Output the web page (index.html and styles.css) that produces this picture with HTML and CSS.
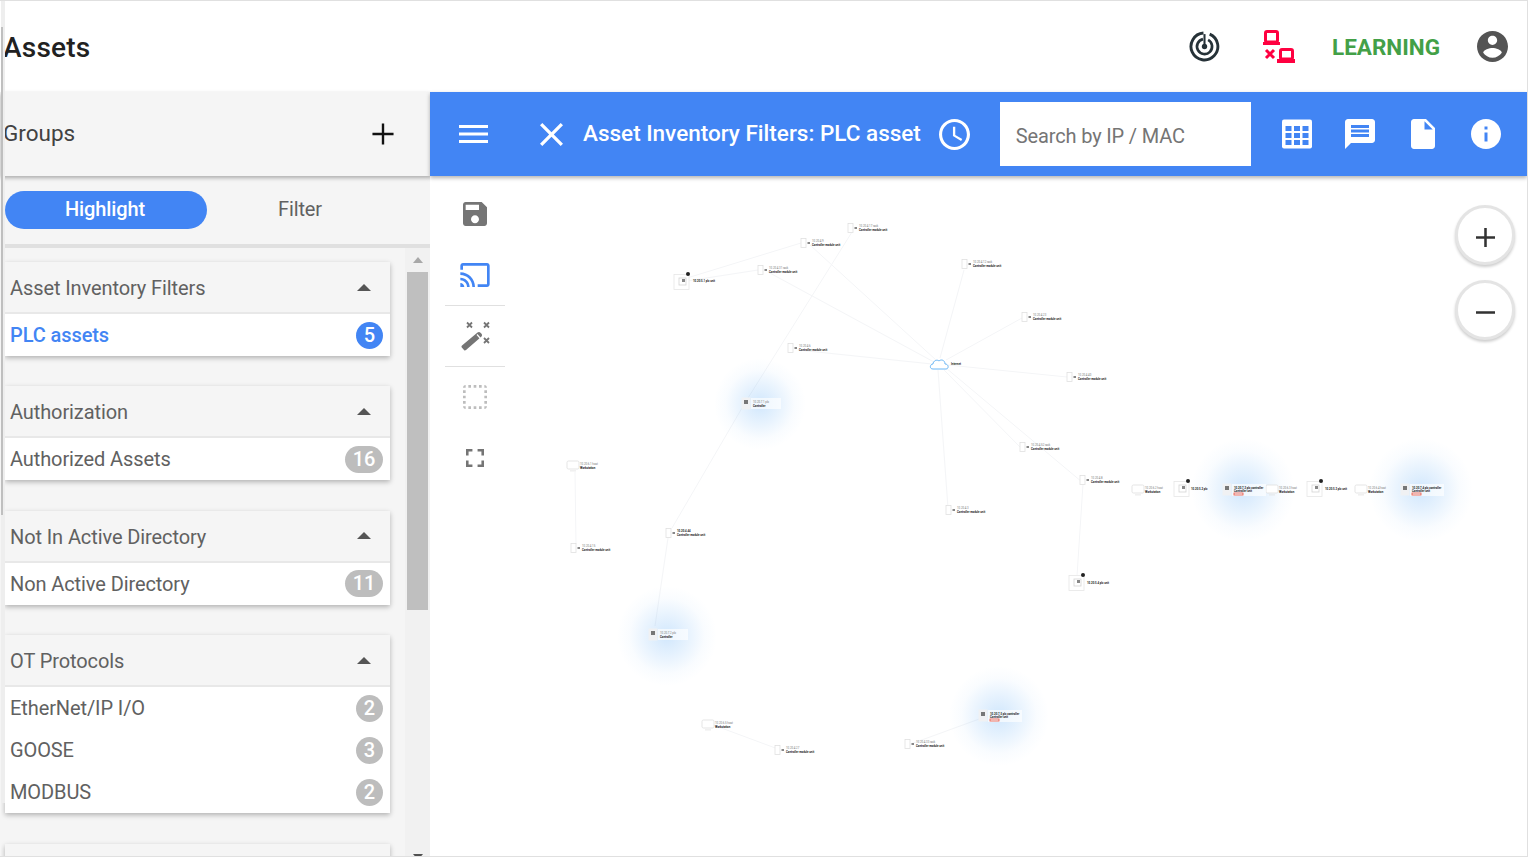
FILE: index.html
```html
<!DOCTYPE html>
<html lang="en">
<head>
    <meta charset="UTF-8">
    <title>Assets</title>
    <link rel="stylesheet" href="styles.css">
</head>
<body>
<div class="app">
    <div class="page-scroll"><div class="page-thumb"></div></div>

    <header class="topbar">
        <h1>Assets</h1>
        <div class="topbar-icons">
            <svg class="radar-icon" viewBox="0 0 30 30">
                <path d="M14 2A13 13 0 1 0 20 3" fill="none" stroke="#263238" stroke-width="2.800"/>
                <path d="M13.500 7.900A7.300 7.300 0 1 0 18.500 8.600" fill="none" stroke="#263238" stroke-width="2.600"/>
                <circle cx="15" cy="15" r="2.600" fill="#263238"/>
                <rect x="14" y="3" width="2" height="12" fill="#263238"/>
            </svg>
            <svg class="net-icon" viewBox="0 0 32 33">
                <rect x="2.500" y="1.500" width="12" height="10.500" rx="1.500" fill="none" stroke="#ff0040" stroke-width="3"/>
                <rect x="0" y="12" width="17" height="3" fill="#ff0040"/>
                <rect x="17.500" y="19.500" width="12" height="9.500" rx="1.500" fill="none" stroke="#ff0040" stroke-width="3"/>
                <rect x="14" y="29" width="18" height="4" fill="#ff0040"/>
                <path d="M3 20l8 8M11 20l-8 8" stroke="#ff0040" stroke-width="3"/>
            </svg>
            <span class="mode-label">LEARNING</span>
            <svg class="account-icon" viewBox="2 2 20 20"><path d="M12 2C6.480 2 2 6.480 2 12s4.480 10 10 10 10-4.480 10-10S17.520 2 12 2zm0 3c1.660 0 3 1.340 3 3s-1.340 3-3 3-3-1.340-3-3 1.340-3 3-3zm0 14.200c-2.500 0-4.710-1.280-6-3.220.03-1.990 4-3.080 6-3.080 1.990 0 5.970 1.090 6 3.080-1.290 1.940-3.500 3.220-6 3.220z"/></svg>
        </div>
    </header>

    <div class="main">
        <aside class="sidebar">
            <div class="groups-head">
                <span>Groups</span>
                <svg class="plus-icon" viewBox="0 0 24 24"><path d="M.5 10.700h10.200V.5h2.600v10.200h10.200v2.600H13.300v10.200h-2.600V13.300H.5z"/></svg>
            </div>
            <div class="tabs">
                <div class="tab tab-active">Highlight</div>
                <div class="tab">Filter</div>
            </div>
            <div class="list-wrap">
                <div class="group-list">
                    <section class="card">
                        <div class="card-head">Asset Inventory Filters<span class="caret"></span></div>
                        <div class="card-body">
                            <div class="row row-active">PLC assets<span class="count count-active">5</span></div>
                        </div>
                    </section>
                    <section class="card">
                        <div class="card-head">Authorization<span class="caret"></span></div>
                        <div class="card-body">
                            <div class="row">Authorized Assets<span class="count count-wide">16</span></div>
                        </div>
                    </section>
                    <section class="card">
                        <div class="card-head">Not In Active Directory<span class="caret"></span></div>
                        <div class="card-body">
                            <div class="row">Non Active Directory<span class="count count-wide">11</span></div>
                        </div>
                    </section>
                    <section class="card">
                        <div class="card-head">OT Protocols<span class="caret"></span></div>
                        <div class="card-body">
                            <div class="row">EtherNet/IP I/O<span class="count">2</span></div>
                            <div class="row">GOOSE<span class="count">3</span></div>
                            <div class="row">MODBUS<span class="count">2</span></div>
                        </div>
                    </section>
                    <section class="card">
                        <div class="card-head"></div>
                    </section>
                </div>
                <div class="list-scroll">
                    <span class="arrow-up"></span>
                    <div class="list-thumb"></div>
                    <span class="arrow-down"></span>
                </div>
            </div>
        </aside>

        <div class="content">
            <div class="toolbar">
                <svg class="tb-icon menu-icon" viewBox="3 6 18 12" preserveAspectRatio="none"><path d="M3 18h18v-2H3v2zm0-5h18v-2H3v2zm0-7v2h18V6H3z"/></svg>
                <svg class="tb-icon close-icon" viewBox="5 5 14 14"><path d="M19 6.410L17.590 5 12 10.590 6.410 5 5 6.410 10.590 12 5 17.590 6.410 19 12 13.410 17.590 19 19 17.590 13.410 12z"/></svg>
                <span class="tb-title">Asset Inventory Filters: PLC asset</span>
                <svg class="tb-icon clock-icon" viewBox="2 2 20 20"><path d="M11.990 2C6.470 2 2 6.480 2 12s4.470 10 9.990 10C17.520 22 22 17.520 22 12S17.520 2 11.990 2zM12 20c-4.420 0-8-3.580-8-8s3.580-8 8-8 8 3.580 8 8-3.580 8-8 8zm.5-13H11v6l5.250 3.150.75-1.230-4.500-2.670z"/></svg>
                <div class="search">Search by IP / MAC</div>
                <div class="tb-actions">
                    <svg class="tb-icon" viewBox="0 0 30 30">
                        <rect x="0" y="0.500" width="30" height="29" rx="2" fill="#fff"/>
                        <g fill="#4285f4">
                            <rect x="3.500" y="7" width="6" height="5"/><rect x="12" y="7" width="6" height="5"/><rect x="20.500" y="7" width="6" height="5"/>
                            <rect x="3.500" y="14" width="6" height="5"/><rect x="12" y="14" width="6" height="5"/><rect x="20.500" y="14" width="6" height="5"/>
                            <rect x="3.500" y="21" width="6" height="5"/><rect x="12" y="21" width="6" height="5"/><rect x="20.500" y="21" width="6" height="5"/>
                        </g>
                    </svg>
                    <svg class="tb-icon" viewBox="2 2 20 20"><path d="M20 2H4c-1.100 0-1.990.9-1.990 2L2 22l4-4h14c1.100 0 2-.9 2-2V4c0-1.100-.9-2-2-2zm-2 12H6v-2h12v2zm0-3H6V9h12v2zm0-3H6V6h12v2z"/></svg>
                    <svg class="tb-icon" viewBox="2 2 20 20"><path d="M6 2c-1.100 0-1.990.9-1.990 2L4 20c0 1.100.89 2 1.990 2H18c1.100 0 2-.9 2-2V8l-6-6H6zm7 7V3.500L18.500 9H13z"/></svg>
                    <svg class="tb-icon" viewBox="2 2 20 20"><path d="M12 2C6.480 2 2 6.480 2 12s4.480 10 10 10 10-4.480 10-10S17.520 2 12 2zm1 15h-2v-6h2v6zm0-8h-2V7h2v2z"/></svg>
                </div>
            </div>

            <div class="stage">
                <div class="tools">
                    <div class="tool">
                        <svg class="tool-icon icon-grey" viewBox="3 3 18 18"><path d="M17 3H5c-1.110 0-2 .9-2 2v14c0 1.100.89 2 2 2h14c1.100 0 2-.9 2-2V7l-4-4zm-5 16c-1.660 0-3-1.340-3-3s1.340-3 3-3 3 1.340 3 3-1.340 3-3 3zm3-10H5V5h10v4z"/></svg>
                    </div>
                    <div class="tool tool-line">
                        <svg class="tool-icon tool-cast" viewBox="1 3 22 18"><path d="M21 3H3c-1.100 0-2 .9-2 2v3h2V5h18v14h-7v2h7c1.100 0 2-.9 2-2V5c0-1.100-.9-2-2-2zM1 18v3h3c0-1.660-1.340-3-3-3zm0-4v2c2.760 0 5 2.240 5 5h2c0-3.870-3.130-7-7-7zm0-4v2c4.970 0 9 4.030 9 9h2c0-6.080-4.930-11-11-11z"/></svg>
                    </div>
                    <div class="tool tool-line">
                        <svg class="tool-icon icon-grey tool-wand" viewBox="0 0 30 30">
                            <path d="M2 24.500L17.500 11.500c1-.8 2.200-.7 3 .2l1 1.100c.8 1 .7 2.200-.2 3L6 29c-.8.6-1.400.6-2-.1l-2.200-2.500c-.5-.6-.4-1.300.2-1.900z"/>
                            <path d="M17 13.500l3.500 4" stroke="#fff" stroke-width="1.200"/>
                            <path d="M7 1.500l5 5M12 1.500l-5 5M24 1.500l5 5M29 1.500l-5 5M24 17l5 5M29 17l-5 5" stroke="#757575" stroke-width="1.800"/>
                        </svg>
                    </div>
                    <div class="tool">
                        <svg class="tool-icon icon-light" viewBox="3 3 18 18"><path d="M3 5h2V3c-1.100 0-2 .9-2 2zm0 8h2v-2H3v2zm4 8h2v-2H7v2zM3 9h2V7H3v2zm10-6h-2v2h2V3zm6 0v2h2c0-1.100-.9-2-2-2zM5 21v-2H3c0 1.100.9 2 2 2zm-2-4h2v-2H3v2zM9 3H7v2h2V3zm2 18h2v-2h-2v2zm8-8h2v-2h-2v2zm0 8c1.100 0 2-.9 2-2h-2v2zm0-12h2V7h-2v2zm0 8h2v-2h-2v2zm-4 4h2v-2h-2v2zm0-16h2V3h-2v2z"/></svg>
                    </div>
                    <div class="tool">
                        <svg class="tool-icon tool-full icon-grey" viewBox="5 5 14 14"><path d="M7 14H5v5h5v-2H7v-3zm-2-4h2V7h3V5H5v5zm12 7h-3v2h5v-5h-2v3zM14 5v2h3v3h2V5h-5z"/></svg>
                    </div>
                </div>

                <!-- topology drawn in page coordinates -->
                <svg class="graph" viewBox="430 176 1097 680">
                    <defs>
                        <radialGradient id="glow">
                            <stop offset="0" stop-color="#3f9bf5" stop-opacity=".24"/>
                            <stop offset=".4" stop-color="#3f9bf5" stop-opacity=".13"/>
                            <stop offset=".75" stop-color="#3f9bf5" stop-opacity=".03"/>
                            <stop offset="1" stop-color="#3f9bf5" stop-opacity="0"/>
                        </radialGradient>
                        <g id="rack">
                            <rect x="0" y="-4.500" width="5" height="9" fill="#fff" stroke="#e0e0e0" stroke-width=".8"/>
                            <rect x="6.500" y="-1" width="2.500" height="2" fill="#888"/>
                        </g>
                        <g id="plc">
                            <rect x="-7" y="-7.500" width="15" height="15" fill="#fff" stroke="#e6e6e6" stroke-width=".8"/>
                            <rect x="-2" y="-4" width="7" height="7" fill="none" stroke="#d4d4d4" stroke-width=".8"/>
                            <rect x="1" y="-3" width="3" height="3" fill="#888"/>
                            <circle cx="7" cy="-8" r="2" fill="#222"/>
                        </g>
                        <g id="monitor">
                            <rect x="-6" y="-4" width="12" height="8" rx="1.500" fill="#fff" stroke="#e2e2e2" stroke-width=".9"/>
                            <rect x="-3" y="5.500" width="6" height=".8" fill="#e2e2e2"/>
                        </g>
                        <g id="unit">
                            <rect x="-4.500" y="-5.500" width="9" height="12" fill="#f0f1f3"/>
                            <rect x="-2" y="-3" width="4" height="4" fill="#777"/>
                        </g>
                    </defs>

                    <g class="edges">
                        <path d="M687 281L758 270M687 278L801 243M810 245L936 360M768 272L934 362"/>
                        <path d="M852 232L748 398M742 408L672 528M668 538L655 626"/>
                        <path d="M964 270L940 358M1022 318L946 360M1067 377L948 365M798 350L932 364"/>
                        <path d="M1022 449L944 370M1082 482L946 368M948 508L938 370M1083 484L1077 576"/>
                        <path d="M575 472L576 544M716 726L778 749M908 745L982 718"/>
                    </g>

                    <circle class="halo" cx="760" cy="404" r="46"/>
                    <circle class="halo" cx="1243" cy="490" r="52"/>
                    <circle class="halo" cx="1421" cy="490" r="52"/>
                    <circle class="halo" cx="667" cy="636" r="50"/>
                    <circle class="halo" cx="999" cy="716" r="50"/>

                    <path class="cloud" d="M933 369c-4 0-3-5 0-5 0-3 4-5 6-3 2-2 6-1 6 3 4 0 4 5 1 5z"/>
                    <text class="lb" x="951" y="365">Internet</text>

                    <g transform="translate(848,228)"><use href="#rack"/><text class="la" x="11" y="-1">10.20.4.17 rack</text><text class="lb" x="11" y="2.500">Controller module unit</text></g>
                    <g transform="translate(801,243)"><use href="#rack"/><text class="la" x="11" y="-1">10.20.4.9</text><text class="lb" x="11" y="2.500">Controller module unit</text></g>
                    <g transform="translate(758,270)"><use href="#rack"/><text class="la" x="11" y="-1">10.20.4.31 rack</text><text class="lb" x="11" y="2.500">Controller module unit</text></g>
                    <g transform="translate(962,264)"><use href="#rack"/><text class="la" x="11" y="-1">10.20.4.12 rack</text><text class="lb" x="11" y="2.500">Controller module unit</text></g>
                    <g transform="translate(1022,317)"><use href="#rack"/><text class="la" x="11" y="-1">10.20.4.23</text><text class="lb" x="11" y="2.500">Controller module unit</text></g>
                    <g transform="translate(1067,377)"><use href="#rack"/><text class="la" x="11" y="-1">10.20.4.40</text><text class="lb" x="11" y="2.500">Controller module unit</text></g>
                    <g transform="translate(788,348)"><use href="#rack"/><text class="la" x="11" y="-1">10.20.4.6</text><text class="lb" x="11" y="2.500">Controller module unit</text></g>
                    <g transform="translate(1020,447)"><use href="#rack"/><text class="la" x="11" y="-1">10.20.4.52 rack</text><text class="lb" x="11" y="2.500">Controller module unit</text></g>
                    <g transform="translate(1080,480)"><use href="#rack"/><text class="la" x="11" y="-1">10.20.4.8</text><text class="lb" x="11" y="2.500">Controller module unit</text></g>
                    <g transform="translate(946,510)"><use href="#rack"/><text class="la" x="11" y="-1">10.20.4.3</text><text class="lb" x="11" y="2.500">Controller module unit</text></g>
                    <g transform="translate(666,533)"><use href="#rack"/><text class="lb" x="11" y="-1">10.20.4.44</text><text class="lb" x="11" y="2.500">Controller module unit</text></g>
                    <g transform="translate(571,548)"><use href="#rack"/><text class="la" x="11" y="-1">10.20.4.15</text><text class="lb" x="11" y="2.500">Controller module unit</text></g>
                    <g transform="translate(775,750)"><use href="#rack"/><text class="la" x="11" y="-1">10.20.4.27</text><text class="lb" x="11" y="2.500">Controller module unit</text></g>
                    <g transform="translate(905,744)"><use href="#rack"/><text class="la" x="11" y="-1">10.20.4.33 rack</text><text class="lb" x="11" y="2.500">Controller module unit</text></g>

                    <g transform="translate(681,282)"><use href="#plc"/><text class="lb" x="12" y="-.5">10.20.5.1 plc unit</text></g>
                    <g transform="translate(1181,489)"><use href="#plc"/><text class="lb" x="10" y="1">10.20.5.2 plc</text></g>
                    <g transform="translate(1314,489)"><use href="#plc"/><text class="lb" x="11" y="1">10.20.5.3 plc unit</text></g>
                    <g transform="translate(1076,583)"><use href="#plc"/><text class="lb" x="11" y="1">10.20.5.4 plc unit</text></g>

                    <g transform="translate(573,465)"><use href="#monitor"/><text class="la" x="7" y="0">10.20.6.1 host</text><text class="lb" x="7" y="3.500">Workstation</text></g>
                    <g transform="translate(1138,489)"><use href="#monitor"/><text class="la" x="7" y="0">10.20.6.2 host</text><text class="lb" x="7" y="3.500">Workstation</text></g>
                    <g transform="translate(1272,489)"><use href="#monitor"/><text class="la" x="7" y="0">10.20.6.3 host</text><text class="lb" x="7" y="3.500">Workstation</text></g>
                    <g transform="translate(1361,489)"><use href="#monitor"/><text class="la" x="7" y="0">10.20.6.4 host</text><text class="lb" x="7" y="3.500">Workstation</text></g>
                    <g transform="translate(708,724)"><use href="#monitor"/><text class="la" x="7" y="0">10.20.6.5 host</text><text class="lb" x="7" y="3.500">Workstation</text></g>

                    <g transform="translate(746,403)"><rect class="label-bg" x="5" y="-5" width="30" height="11"/><use href="#unit"/><text class="la" x="7" y="0">10.20.7.1 plc</text><text class="lb" x="7" y="3.500">Controller</text></g>
                    <g transform="translate(653,634)"><rect class="label-bg" x="5" y="-5" width="30" height="11"/><use href="#unit"/><text class="la" x="7" y="0">10.20.7.2 plc</text><text class="lb" x="7" y="3.500">Controller</text></g>
                    <g transform="translate(1227,489)"><rect class="label-bg" x="5" y="-5" width="34" height="12"/><use href="#unit"/><text class="lb" x="7" y="-.5">10.20.7.3 plc controller</text><text class="lb" x="7" y="2.500">Controller unit</text><rect class="tag" x="7" y="4" width="9" height="2"/></g>
                    <g transform="translate(1405,489)"><rect class="label-bg" x="5" y="-5" width="34" height="12"/><use href="#unit"/><text class="lb" x="7" y="-.5">10.20.7.4 plc controller</text><text class="lb" x="7" y="2.500">Controller unit</text><rect class="tag" x="7" y="4" width="9" height="2"/></g>
                    <g transform="translate(983,715)"><rect class="label-bg" x="5" y="-5" width="34" height="12"/><use href="#unit"/><text class="lb" x="7" y="-.5">10.20.7.5 plc controller</text><text class="lb" x="7" y="2.500">Controller unit</text><rect class="tag" x="7" y="4" width="9" height="2"/></g>
                </svg>

                <div class="zoom-btns">
                    <div class="zoom-btn"><svg viewBox="0 0 18 18"><path d="M7.800 0h2.400v7.800H18v2.400h-7.800V18H7.800v-7.800H0V7.800h7.800z"/></svg></div>
                    <div class="zoom-btn"><svg viewBox="0 0 18 18"><path d="M0 7.800h18v2.400H0z"/></svg></div>
                </div>
            </div>
        </div>
    </div>
</div>
</body>
</html>
```

FILE: styles.css
```css
* {
    box-sizing: border-box;
}

body {
    margin: 0;
    font-family: Roboto, "Liberation Sans", sans-serif;
    color: #616161;
    background-color: #fff;
}

.app {
    position: relative;
    width: 1528px;
    height: 857px;
    overflow: hidden;
    display: flex;
    flex-direction: column;
    border-top: 1px solid #e0e0e0;
    border-right: 1px solid #e0e0e0;
    border-bottom: 1px solid #e0e0e0;
}

/* outer scrollbar sitting on the left edge */
.page-scroll {
    position: absolute;
    left: 1px;
    top: 0;
    bottom: 53px;
    width: 4px;
    z-index: 5;
    background-color: #eee;
}

.page-thumb {
    margin-top: 26px;
    height: 488px;
    width: 2px;
    background-color: #bfbfbf;
}

.topbar {
    height: 91px;
    flex: none;
    display: flex;
    align-items: center;
    justify-content: space-between;
    padding-left: 3px;
}

.topbar h1 {
    margin: 2px 0 0;
    font-size: 28px;
    font-weight: 500;
    letter-spacing: .2px;
    color: #212121;
}

.topbar-icons {
    display: flex;
    align-items: center;
    padding-right: 19px;
}

.radar-icon {
    width: 31px;
    height: 31px;
    margin-right: 43px;
}

.net-icon {
    width: 32px;
    height: 33px;
    margin-right: 37px;
}

.mode-label {
    font-size: 22.500px;
    font-weight: 700;
    color: #43a047;
    margin-right: 37px;
}

.account-icon {
    width: 31px;
    height: 31px;
    fill: #545454;
}

.main {
    flex: 1;
    display: flex;
    min-height: 0;
}

.sidebar {
    width: 430px;
    flex: none;
    display: flex;
    flex-direction: column;
    background-color: #f5f5f5;
    padding-left: 1px;
}

.groups-head {
    height: 84px;
    flex: none;
    display: flex;
    align-items: center;
    justify-content: space-between;
    padding: 0 35px 2px 2px;
    font-size: 22.500px;
    color: #424242;
    box-shadow: 0 2px 4px rgba(0, 0, 0, 0.3);
    position: relative;
}

.plus-icon {
    width: 22px;
    height: 22px;
    margin-top: 2px;
    margin-right: 1px;
    fill: #111;
}

.tabs {
    height: 72px;
    flex: none;
    display: flex;
    align-items: center;
    padding-left: 4px;
    border-bottom: 4px solid #e0e0e0;
}

.tab {
    width: 200px;
    height: 38px;
    line-height: 36px;
    text-align: center;
    font-size: 20px;
    letter-spacing: -.1px;
    border-radius: 19px;
}

.tab-active {
    width: 202px;
    padding-right: 2px;
    background-color: #4285f4;
    color: #fff;
    font-weight: 500;
}

.tab + .tab {
    width: 186px;
}

.list-wrap {
    flex: 1;
    min-height: 0;
    display: flex;
    overflow: hidden;
}

.group-list {
    flex: 1;
    min-width: 0;
    padding: 14px 15px 0 4px;
}

.card {
    margin-bottom: 30.400px;
    background-color: #fff;
    box-shadow: 0 2px 5px rgba(0, 0, 0, 0.28);
}

.card-head {
    height: 52px;
    display: flex;
    align-items: center;
    justify-content: space-between;
    padding: 2px 19px 0 5px;
    font-size: 20px;
    letter-spacing: -.1px;
    background-color: #f5f5f5;
    border-bottom: 2px solid #e8e8e8;
}

.caret {
    width: 0;
    height: 0;
    margin-top: -2px;
    border-left: 7.500px solid transparent;
    border-right: 7.500px solid transparent;
    border-bottom: 7.500px solid #555;
}

.row {
    height: 42px;
    display: flex;
    align-items: center;
    justify-content: space-between;
    padding: 0 7px 0 5px;
    font-size: 20px;
    letter-spacing: -.1px;
}

.row-active {
    color: #4285f4;
    font-weight: 500;
}

.count {
    min-width: 27px;
    height: 27px;
    line-height: 27px;
    padding: 0 6px;
    text-align: center;
    border-radius: 14px;
    font-size: 20px;
    font-weight: 500;
    color: #fff;
    background-color: #bdbdbd;
}

.count-wide {
    min-width: 38px;
}

.count-active {
    background-color: #4285f4;
}

.list-scroll {
    width: 25px;
    flex: none;
    display: flex;
    flex-direction: column;
    align-items: center;
    background-color: #f1f1f1;
    position: relative;
}

.arrow-up {
    margin-top: 9px;
    width: 0;
    height: 0;
    border-left: 5.500px solid transparent;
    border-right: 5.500px solid transparent;
    border-bottom: 6px solid #a8a8a8;
}

.list-thumb {
    margin-top: 9px;
    width: 21px;
    height: 338px;
    background-color: #bfbfbf;
}

.arrow-down {
    margin-top: auto;
    width: 0;
    height: 0;
    margin-bottom: -4px;
    border-left: 5.500px solid transparent;
    border-right: 5.500px solid transparent;
    border-top: 6px solid #505050;
}

.content {
    flex: 1;
    min-width: 0;
    display: flex;
    flex-direction: column;
}

.toolbar {
    height: 84px;
    flex: none;
    display: flex;
    align-items: center;
    background-color: #4285f4;
    color: #fff;
    box-shadow: 0 2px 4px rgba(0, 0, 0, 0.3);
    position: relative;
    z-index: 2;
}

.tb-icon {
    width: 30px;
    height: 30px;
    fill: #fff;
    flex: none;
}

.menu-icon {
    width: 29px;
    height: 18px;
    margin-left: 29px;
}

.close-icon {
    width: 23px;
    height: 23px;
    margin-left: 52px;
}

.tb-title {
    margin-left: 20px;
    padding-bottom: 2px;
    font-size: 22.500px;
    font-weight: 500;
    white-space: nowrap;
}

.clock-icon {
    width: 31px;
    height: 31px;
    margin-left: 18px;
}

.search {
    width: 251px;
    height: 64px;
    margin-left: 30px;
    padding-left: 16px;
    line-height: 68px;
    font-size: 20px;
    letter-spacing: -.15px;
    color: #757575;
    background-color: #fff;
}

.tb-actions {
    display: flex;
    gap: 33px;
    margin-left: 31px;
}

.stage {
    flex: 1;
    min-height: 0;
    position: relative;
    background-color: #fff;
}

.tools {
    position: relative;
    z-index: 1;
    width: 60px;
    margin-left: 15px;
    padding-top: 8px;
}

.tool {
    height: 60px;
    margin-bottom: 1px;
    display: flex;
    align-items: center;
    justify-content: center;
}

.tool-line {
    border-bottom: 1px solid #e0e0e0;
    margin-bottom: 0;
    height: 61px;
}

.tool-icon {
    width: 24px;
    height: 24px;
}

.tool-cast {
    width: 30px;
    fill: #4285f4;
}

.tool-wand {
    width: 30px;
    height: 30px;
}

.tool-full {
    width: 18px;
    height: 18px;
}

.icon-grey {
    fill: #757575;
}

.icon-light {
    fill: #bdbdbd;
}

.graph {
    position: absolute;
    left: 0;
    top: 0;
    width: 100%;
    height: 100%;
}

.edges path {
    fill: none;
    stroke: #f4f5f7;
    stroke-width: 1;
}

.halo {
    fill: url(#glow);
}

.label-bg {
    fill: #fff;
    fill-opacity: .65;
}

.cloud {
    fill: #fff;
    stroke: #6bb6f5;
    stroke-width: 1;
}

.la,
.lb {
    font-family: Roboto, sans-serif;
    font-size: 2.800px;
}

.la {
    fill: #777;
}

.lb {
    fill: #222;
    font-weight: 700;
}

.tag {
    fill: none;
    stroke: #f0503c;
    stroke-width: .8;
}

.zoom-btns {
    position: absolute;
    top: 29px;
    right: 12px;
    display: flex;
    flex-direction: column;
    gap: 15px;
    z-index: 1;
}

.zoom-btn {
    width: 60px;
    height: 60px;
    padding-top: 5px;
    display: flex;
    align-items: center;
    justify-content: center;
    border-radius: 50%;
    border: 3px solid #e4e4e4;
    background-color: #fff;
    box-shadow: 0 2px 3px rgba(0, 0, 0, 0.2);
}

.zoom-btn svg {
    width: 19px;
    height: 19px;
    fill: #333;
}
```
